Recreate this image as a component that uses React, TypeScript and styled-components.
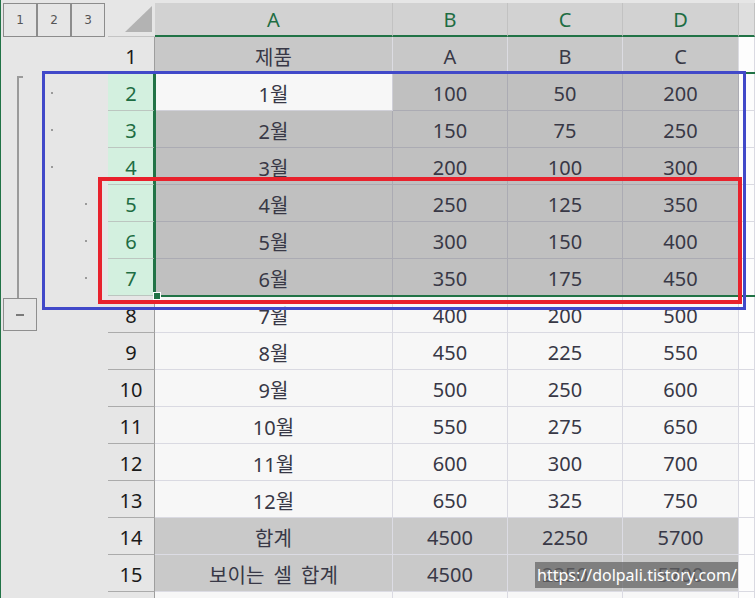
import React from "react";
import styled, { createGlobalStyle } from "styled-components";

const Global = createGlobalStyle`
  html, body { margin: 0; padding: 0; background: #e6e6e6; overflow: hidden; }
  #root { width: 755px; height: 598px; }
`;

const GREEN = "#217346";

const Sheet = styled.div`
  position: relative;
  width: 755px;
  height: 598px;
  overflow: hidden;
  display: grid;
  grid-template-columns: 108px 47px 238px 115px 115px 116px 1fr;
  grid-template-rows: 37px repeat(16, 37px);
  background: #e6e6e6;
  box-shadow: inset 1px 0 0 ${GREEN};
  font-family: "Noto Sans", "Noto Sans CJK KR", sans-serif;
`;

const LevelBar = styled.div`
  display: flex;
  padding: 3px 0 0 3px;
  box-sizing: border-box;
`;

const LevelButton = styled.div`
  width: 34px;
  height: 34px;
  box-sizing: border-box;
  border: 1px solid #8c8c8c;
  display: flex;
  align-items: center;
  justify-content: center;
  font-family: "DejaVu Sans", sans-serif;
  font-size: 12px;
  color: #555;
`;

const Corner = styled.div`
  display: flex;
  align-items: flex-end;
  justify-content: flex-end;
  padding: 0 3px 4px 0;
  box-sizing: border-box;
  border-bottom: 1px solid #c4c4c4;
`;

const ColHead = styled.div<{ $dim?: boolean }>`
  margin-top: 3px;
  background: ${(p) => (p.$dim ? "#dedede" : "#d2d2d2")};
  border-right: 1px solid #c2c2c2;
  border-bottom: 2px solid ${GREEN};
  display: flex;
  align-items: center;
  justify-content: center;
  padding-top: 1px;
  color: #1e6d43;
  font-size: 20px;
  box-sizing: border-box;
`;

const OutlinePane = styled.div`
  grid-column: 1;
  grid-row: 2 / span 16;
  display: flex;
  flex-direction: column;
  padding: 39px 0 0 0;
  box-sizing: border-box;
`;

const Bracket = styled.svg`
  display: block;
  width: 107px;
  height: 222px;
  margin-left: 1px;
`;

const CollapseButton = styled.div`
  margin-left: 3px;
  width: 34px;
  height: 33px;
  box-sizing: border-box;
  border: 1px solid #8f8f8f;
  display: flex;
  align-items: center;
  justify-content: center;
  &::before {
    content: "";
    width: 8px;
    height: 2px;
    background: #7a7a7a;
  }
`;

const RowHead = styled.div<{ $sel?: boolean }>`
  grid-column: 2;
  box-sizing: border-box;
  background: ${(p) => (p.$sel ? "#d3f0df" : "#e6e6e6")};
  border-bottom: 1px solid ${(p) => (p.$sel ? "#bcc6c0" : "#ababab")};
  border-right: ${(p) => (p.$sel ? `2px solid ${GREEN}` : "1px solid #9e9e9e")};
  color: ${(p) => (p.$sel ? "#1e6d43" : "#1a1a1a")};
  display: flex;
  align-items: center;
  justify-content: center;
  padding-top: 2px;
  padding-left: ${(p) => (p.$sel ? "1px" : "0")};
  font-size: 20px;
`;

type Tone = "head" | "sel" | "active" | "plain" | "total" | "blank";

const toneBg: Record<Tone, string> = {
  head: "#c8c8c8",
  sel: "#c0c0c0",
  active: "#f7f7f7",
  plain: "#f7f7f7",
  total: "#c9c9c9",
  blank: "#fdfdfd",
};
const toneLine: Record<Tone, string> = {
  head: "#dcdce2",
  sel: "#ababb3",
  active: "#d0d0d8",
  plain: "#dadae2",
  total: "#dcdce4",
  blank: "#dadae2",
};

const Cell = styled.div<{ $tone: Tone }>`
  box-sizing: border-box;
  background: ${(p) => toneBg[p.$tone]};
  border-right: 1px solid ${(p) => toneLine[p.$tone]};
  border-bottom: 1px solid ${(p) => toneLine[p.$tone]};
  color: #383846;
  font-size: 20px;
  word-spacing: 4px;
  padding-top: 2px;
  display: flex;
  align-items: center;
  justify-content: center;
  white-space: nowrap;
  overflow: hidden;
`;

const Frame = styled.div<{ $color: string; $w: number }>`
  position: absolute;
  box-sizing: border-box;
  border: ${(p) => p.$w}px solid ${(p) => p.$color};
  pointer-events: none;
`;

const SelectionFrame = styled.div`
  position: absolute;
  left: 154px;
  top: 72px;
  right: -4px;
  height: 225px;
  box-sizing: border-box;
  border: 2px solid ${GREEN};
  pointer-events: none;
`;

const FillHandle = styled.div`
  position: absolute;
  left: 154px;
  top: 293px;
  width: 6px;
  height: 6px;
  box-sizing: border-box;
  background: ${GREEN};
  box-shadow: 0 0 0 1px #fff;
`;

const Watermark = styled.div`
  position: absolute;
  left: 535px;
  top: 562px;
  width: 203px;
  height: 26px;
  background: rgba(98, 98, 98, 0.72);
  color: #fff;
  font-family: "Noto Sans", sans-serif;
  font-size: 16px;
  line-height: 26px;
  padding-left: 2px;
  box-sizing: border-box;
  white-space: nowrap;
  overflow: hidden;
`;

type Row = { label: string; vals: (string | number)[]; kind: "head" | "sel" | "plain" | "total" | "empty" };

const rows: Row[] = [
  { label: "제품", vals: ["A", "B", "C"], kind: "head" },
  ...Array.from({ length: 12 }, (_, i) => {
    const n = i + 1;
    return {
      label: `${n}월`,
      vals: [50 * n + 50, 25 * n + 25, 50 * n + 150],
      kind: (n <= 6 ? "sel" : "plain") as Row["kind"],
    };
  }),
  { label: "합계", vals: [4500, 2250, 5700], kind: "total" },
  { label: "보이는 셀 합계", vals: [4500, 2250, 5700], kind: "total" },
  { label: "", vals: ["", "", ""], kind: "empty" },
];

function toneFor(kind: Row["kind"], rowIdx: number, col: number): Tone {
  if (kind === "head") return "head";
  if (kind === "sel") return rowIdx === 1 && col === 0 ? "active" : "sel";
  if (kind === "total") return "total";
  return "plain";
}

export default function App() {
  return (
    <>
      <Global />
      <Sheet>
        <LevelBar>
          <LevelButton>1</LevelButton>
          <LevelButton>2</LevelButton>
          <LevelButton>3</LevelButton>
        </LevelBar>
        <Corner>
          <svg width="27" height="26" viewBox="0 0 27 26">
            <polygon points="27,0 27,26 0,26" fill="#b3b3b3" />
          </svg>
        </Corner>
        <ColHead>A</ColHead>
        <ColHead>B</ColHead>
        <ColHead>C</ColHead>
        <ColHead>D</ColHead>
        <ColHead $dim />

        <OutlinePane>
          <Bracket viewBox="1 76 107 222">
            <rect x="17" y="76" width="2" height="222" fill="#9a9a9a" />
            <rect x="17" y="76" width="6" height="2" fill="#9a9a9a" />
            {[92, 129, 166].map((y) => (
              <rect key={y} x="51" y={y} width="2" height="2" fill="#9a9a9a" />
            ))}
            {[203, 240, 277].map((y) => (
              <rect key={y} x="85" y={y} width="2" height="2" fill="#9a9a9a" />
            ))}
          </Bracket>
          <CollapseButton />
        </OutlinePane>

        {rows.map((r, i) => (
          <React.Fragment key={i}>
            <RowHead $sel={r.kind === "sel"}>{r.kind === "empty" ? "" : i + 1}</RowHead>
            <Cell $tone={toneFor(r.kind, i, 0)}>{r.label}</Cell>
            {r.vals.map((v, j) => (
              <Cell key={j} $tone={toneFor(r.kind, i, j + 1)}>
                {v}
              </Cell>
            ))}
            <Cell $tone="blank" />
          </React.Fragment>
        ))}

        <SelectionFrame />
        <FillHandle />
        <Frame $color="#4149c9" $w={3} style={{ left: 42, top: 71, width: 704, height: 239 }} />
        <Frame $color="#e8212c" $w={4} style={{ left: 98, top: 177, width: 644, height: 127 }} />
        <Watermark>https://dolpali.tistory.com/</Watermark>
      </Sheet>
    </>
  );
}
